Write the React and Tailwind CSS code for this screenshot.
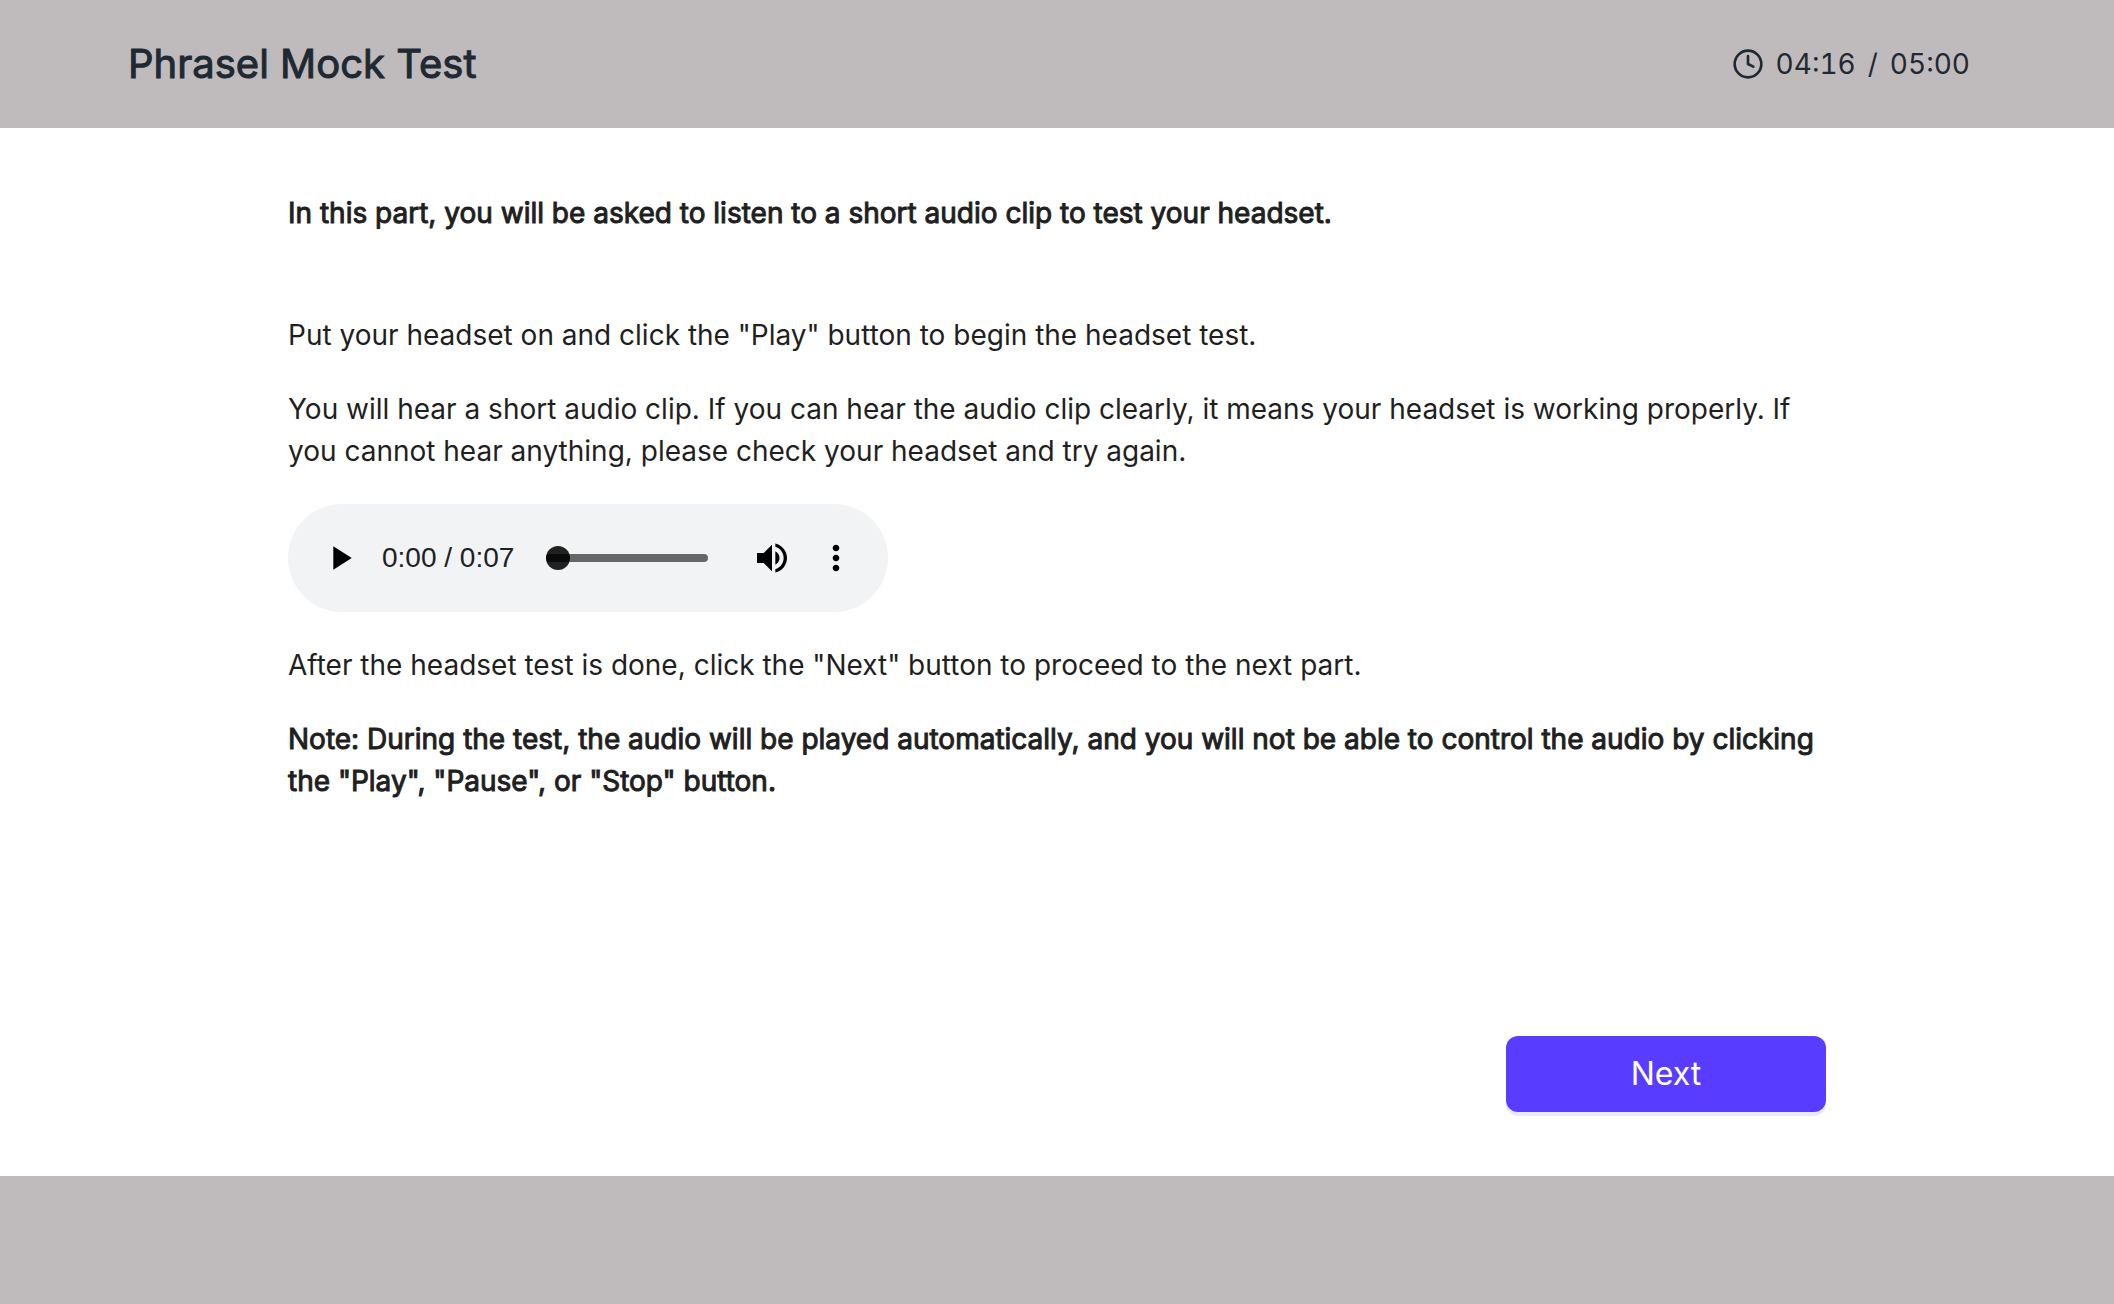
import React, { useState } from 'react';
import { Clock } from 'lucide-react';

const formatTime = (seconds) => `${Math.floor(seconds / 60)}:${String(seconds % 60).padStart(2, '0')}`;

function AudioPlayer({ duration }) {
  const [time, setTime] = useState(0);

  return (
    <div className="flex items-center w-full max-w-[600px] h-[108px] px-5 rounded-full bg-[#f1f3f4] text-black">
      <button type="button" aria-label="Play" className="flex items-center justify-center size-16 shrink-0">
        <svg viewBox="0 0 24 24" className="size-10" fill="currentColor">
          <path d="M8 5v14l11-7z" />
        </svg>
      </button>
      <span className="ml-2.5 shrink-0 font-['Liberation_Sans',sans-serif] leading-8 text-[#202124]">
        {formatTime(time)} / {formatTime(duration)}
      </span>
      <input
        type="range"
        aria-label="Audio position"
        min="0"
        max={duration}
        value={time}
        onChange={(e) => setTime(Number(e.target.value))}
        className="appearance-none mx-8 min-w-0 flex-1 h-2 rounded-full bg-[#656666] [&::-webkit-slider-thumb]:appearance-none [&::-webkit-slider-thumb]:size-6 [&::-webkit-slider-thumb]:rounded-full [&::-webkit-slider-thumb]:bg-[linear-gradient(#212121_8px,#0a0a0a_8px,#0a0a0a_16px,#212121_16px)]"
      />
      <button type="button" aria-label="Mute" className="flex items-center justify-center size-16 shrink-0">
        <svg viewBox="0 0 24 24" className="size-10" fill="currentColor">
          <path d="M3 9v6h4l5 5V4L7 9H3zm13.5 3c0-1.77-1.02-3.29-2.5-4.03v8.05c1.48-.73 2.5-2.25 2.5-4.02zM14 3.23v2.06c2.89.86 5 3.54 5 6.71s-2.11 5.85-5 6.71v2.06c4.01-.91 7-4.49 7-8.77s-2.99-7.86-7-8.77z" />
        </svg>
      </button>
      <button type="button" aria-label="More options" className="flex items-center justify-center size-16 shrink-0">
        <svg viewBox="0 0 24 24" className="size-10" fill="currentColor">
          <path d="M12 8c1.1 0 2-.9 2-2s-.9-2-2-2-2 .9-2 2 .9 2 2 2zm0 2c-1.1 0-2 .9-2 2s.9 2 2 2 2-.9 2-2-.9-2-2-2zm0 6c-1.1 0-2 .9-2 2s.9 2 2 2 2-.9 2-2-.9-2-2-2z" />
        </svg>
      </button>
    </div>
  );
}

export default function App() {
  return (
    <div className="flex flex-col min-h-screen bg-white font-['Inter',sans-serif] text-[28px] leading-[42px] text-[#1f1f1f]">
      <header className="flex items-center justify-between h-32 px-32 bg-[#bfbbbc] text-[#1f2933]">
        <h1 className="text-[40px] [-webkit-text-stroke:1px]">Phrasel Mock Test</h1>
        <div className="flex items-center gap-3 pr-4 tabular-nums">
          <Clock className="size-8" />
          <span>04:16</span>
          <span>/</span>
          <span>05:00</span>
        </div>
      </header>

      <main className="flex flex-1 flex-col px-72 py-16">
        <p className="[-webkit-text-stroke:1px]">
          In this part, you will be asked to listen to a short audio clip to test your headset.
        </p>
        <div className="flex flex-col gap-8 mt-20">
          <p>Put your headset on and click the "Play" button to begin the headset test.</p>
          <p>
            You will hear a short audio clip. If you can hear the audio clip clearly, it means your headset is working
            properly. If you cannot hear anything, please check your headset and try again.
          </p>
          <AudioPlayer duration={7} />
          <p>After the headset test is done, click the "Next" button to proceed to the next part.</p>
          <p className="[-webkit-text-stroke:1px]">
            Note: During the test, the audio will be played automatically, and you will not be able to control the
            audio by clicking the "Play", "Pause", or "Stop" button.
          </p>
        </div>
        <button
          type="button"
          className="mt-auto self-end w-80 h-[76px] rounded-xl bg-[#583cff] text-[32px] text-white shadow-[0_4px_0_#ebe7ff]"
        >
          Next
        </button>
      </main>

      <footer className="h-32 bg-[#bfbbbc]" />
    </div>
  );
}
